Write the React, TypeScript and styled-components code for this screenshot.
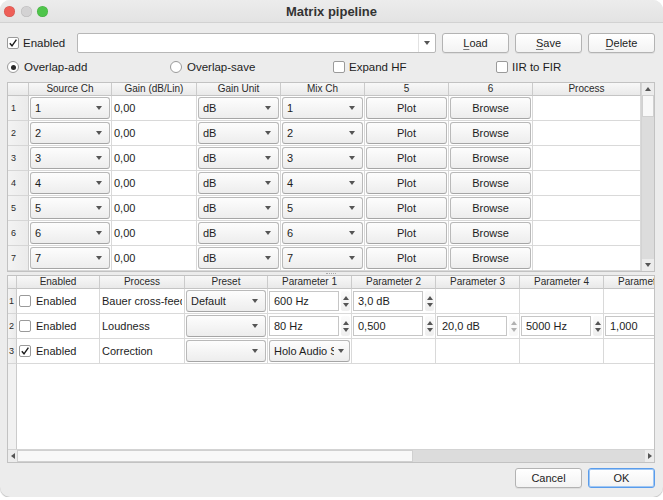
import React from 'react';
import styled, { createGlobalStyle, css } from 'styled-components';

const GlobalStyle = createGlobalStyle`
  html, body {
    margin: 0;
    padding: 0;
    background: #ffffff;
  }
  body {
    font-family: "Liberation Sans", Arial, sans-serif;
    color: #1d1d1d;
  }
  * {
    box-sizing: border-box;
  }
`;

const topColumns = ['Source Ch', 'Gain (dB/Lin)', 'Gain Unit', 'Mix Ch', '5', '6', 'Process'];
const bottomColumns = [
  'Enabled',
  'Process',
  'Preset',
  'Parameter 1',
  'Parameter 2',
  'Parameter 3',
  'Parameter 4',
  'Parameter 5',
];

type Param = { kind: 'spin'; value: string; dim?: boolean } | { kind: 'combo'; value: string } | null;

const filters: { enabled: boolean; process: string; preset: string; params: Param[] }[] = [
  {
    enabled: false,
    process: 'Bauer cross-feed',
    preset: 'Default',
    params: [{ kind: 'spin', value: '600 Hz' }, { kind: 'spin', value: '3,0 dB' }, null, null, null],
  },
  {
    enabled: false,
    process: 'Loudness',
    preset: '',
    params: [
      { kind: 'spin', value: '80 Hz' },
      { kind: 'spin', value: '0,500' },
      { kind: 'spin', value: '20,0 dB', dim: true },
      { kind: 'spin', value: '5000 Hz' },
      { kind: 'spin', value: '1,000' },
    ],
  },
  {
    enabled: true,
    process: 'Correction',
    preset: '',
    params: [{ kind: 'combo', value: 'Holo Audio Spring' }, null, null, null, null],
  },
];

const Check = ({ checked }: { checked?: boolean }) => (
  <CheckBox>
    {checked && (
      <svg width="10" height="10" viewBox="0 0 10 10">
        <path d="M1.8 5.2 L4 7.8 L8.4 1.6" fill="none" stroke="#1d1d1d" strokeWidth="1.4" />
      </svg>
    )}
  </CheckBox>
);

const Spin = ({ value, dim }: { value: string; dim?: boolean }) => (
  <SpinBox>
    <SpinField>{value}</SpinField>
    <Stepper $dim={dim}>
      <ArrowUp />
      <ArrowDown />
    </Stepper>
  </SpinBox>
);

export default function App() {
  return (
    <>
      <GlobalStyle />
      <Window>
        <TitleBar>
          <Lights>
            <Light $color="#ee5f58" />
            <Light $color="#d3d2d3" />
            <Light $color="#4fc54b" />
          </Lights>
          <Title>Matrix pipeline</Title>
          <span />
        </TitleBar>

        <Content>
          <Toolbar>
            <CheckLabel>
              <Check checked />
              Enabled
            </CheckLabel>
            <PresetCombo>
              <PresetField />
              <PresetArrow>
                <ArrowDown />
              </PresetArrow>
            </PresetCombo>
            <PushButton>
              <u>L</u>oad
            </PushButton>
            <PushButton>
              <u>S</u>ave
            </PushButton>
            <PushButton>
              <u>D</u>elete
            </PushButton>
          </Toolbar>

          <Options>
            <CheckLabel>
              <Radio $on />
              Overlap-add
            </CheckLabel>
            <CheckLabel>
              <Radio />
              Overlap-save
            </CheckLabel>
            <CheckLabel>
              <Check />
              Expand HF
            </CheckLabel>
            <CheckLabel>
              <Check />
              IIR to FIR
            </CheckLabel>
          </Options>

          <TopPanel>
            <Viewport>
              <TopGrid>
                <HeaderCell />
                {topColumns.map((c) => (
                  <HeaderCell key={c}>{c}</HeaderCell>
                ))}
                {[1, 2, 3, 4, 5, 6, 7].map((n) => (
                  <React.Fragment key={n}>
                    <RowHead>{n}</RowHead>
                    <Cell>
                      <Combo>
                        <span>{n}</span>
                        <ArrowDown />
                      </Combo>
                    </Cell>
                    <Cell $text>0,00</Cell>
                    <Cell>
                      <Combo>
                        <span>dB</span>
                        <ArrowDown />
                      </Combo>
                    </Cell>
                    <Cell>
                      <Combo>
                        <span>{n}</span>
                        <ArrowDown />
                      </Combo>
                    </Cell>
                    <Cell>
                      <CellButton>Plot</CellButton>
                    </Cell>
                    <Cell>
                      <CellButton>Browse</CellButton>
                    </Cell>
                    <Cell />
                  </React.Fragment>
                ))}
              </TopGrid>
            </Viewport>
            <VScroll>
              <ScrollArrow>
                <ArrowUp />
              </ScrollArrow>
              <VThumb />
              <VTrack />
              <ScrollArrow>
                <ArrowDown />
              </ScrollArrow>
            </VScroll>
          </TopPanel>

          <Splitter>
            <Grip />
          </Splitter>

          <BottomPanel>
            <BottomViewport>
              <BottomGrid>
                <HeaderCell />
                {bottomColumns.map((c) => (
                  <HeaderCell key={c}>{c}</HeaderCell>
                ))}
                {filters.map((f, i) => (
                  <React.Fragment key={i}>
                    <RowHead $narrow>{i + 1}</RowHead>
                    <Cell $text>
                      <Check checked={f.enabled} />
                      <EnabledText>Enabled</EnabledText>
                    </Cell>
                    <Cell $text>
                      <Clip>{f.process}</Clip>
                    </Cell>
                    <Cell>
                      <Combo>
                        <span>{f.preset}</span>
                        <ArrowDown />
                      </Combo>
                    </Cell>
                    {f.params.map((p, j) => (
                      <Cell key={j}>
                        {p?.kind === 'spin' && <Spin value={p.value} dim={p.dim} />}
                        {p?.kind === 'combo' && (
                          <Combo $tight>
                            <Clip>{p.value}</Clip>
                            <ArrowDown />
                          </Combo>
                        )}
                      </Cell>
                    ))}
                  </React.Fragment>
                ))}
              </BottomGrid>
            </BottomViewport>
            <HScroll>
              <HArrow>
                <ArrowLeft />
              </HArrow>
              <HThumb />
              <HTrack />
              <HArrow>
                <ArrowRight />
              </HArrow>
            </HScroll>
          </BottomPanel>

          <Footer>
            <PushButton>Cancel</PushButton>
            <PushButton $default>OK</PushButton>
          </Footer>
        </Content>
      </Window>
    </>
  );
}

const Window = styled.div`
  width: 663px;
  height: 497px;
  background: #ececec;
  border-radius: 10px;
  overflow: hidden;
  display: flex;
  flex-direction: column;
  box-shadow: 0 1px 1px rgba(0, 0, 0, 0.25);
`;

const TitleBar = styled.div`
  flex: none;
  height: 23px;
  display: grid;
  grid-template-columns: 1fr auto 1fr;
  align-items: center;
  padding: 0 4px;
  background: linear-gradient(#ececec, #e3e3e3);
  border-bottom: 1px solid #d2d2d2;
`;

const Lights = styled.div`
  display: flex;
  gap: 5.5px;
  padding-top: 1px;
`;

const Light = styled.span<{ $color: string }>`
  width: 11px;
  height: 11px;
  border-radius: 50%;
  background: ${(p) => p.$color};
  box-shadow: inset 0 0 0 0.5px rgba(0, 0, 0, 0.12);
`;

const Title = styled.div`
  font-size: 13px;
  font-weight: bold;
  color: #333333;
`;

const Content = styled.div`
  flex: 1;
  display: flex;
  flex-direction: column;
  padding: 10px 8px 9px 7px;
  font-size: 11px;
`;

const Toolbar = styled.div`
  display: flex;
  align-items: center;
  height: 20px;
  gap: 6px;
`;

const CheckLabel = styled.label`
  display: flex;
  align-items: center;
  gap: 4px;
  font-size: 11.5px;
  color: #1d1d1d;
  white-space: nowrap;
`;

const CheckBox = styled.span`
  flex: none;
  width: 12px;
  height: 12px;
  border: 1px solid #9a9a9a;
  border-radius: 2px;
  background: #ffffff;
  display: flex;
  align-items: center;
  justify-content: center;
`;

const Radio = styled.span<{ $on?: boolean }>`
  flex: none;
  width: 12px;
  height: 12px;
  border: 1px solid #9a9a9a;
  border-radius: 50%;
  background: #ffffff;
  display: flex;
  align-items: center;
  justify-content: center;
  margin-right: 1px;
  &::after {
    content: '';
    width: 5px;
    height: 5px;
    border-radius: 50%;
    background: ${(p) => (p.$on ? '#2a2a2a' : 'transparent')};
  }
`;

const PresetCombo = styled.div`
  flex: 1;
  height: 20px;
  margin-left: 6px;
  display: flex;
  border: 1px solid #b7b7b7;
  border-radius: 2px;
  background: #ffffff;
`;

const PresetField = styled.div`
  flex: 1;
`;

const PresetArrow = styled.div`
  width: 17px;
  display: flex;
  align-items: center;
  justify-content: center;
  border-left: 1px solid #e2e2e2;
`;

const PushButton = styled.button<{ $default?: boolean }>`
  flex: none;
  width: 67px;
  height: 20px;
  padding: 0;
  font: 11px "Liberation Sans", Arial, sans-serif;
  color: #1d1d1d;
  background: linear-gradient(#ffffff, #f3f3f3);
  border: 1px solid #b3b3b3;
  border-radius: 3px;
  box-shadow: 0 1px 0 rgba(0, 0, 0, 0.06);

  u {
    text-underline-offset: 2px;
    text-decoration-color: #777;
  }

  ${(p) =>
    p.$default &&
    css`
      border-color: #5a9ceb;
      box-shadow: inset 0 0 0 1px #9fc7f4;
    `}
`;

const Options = styled.div`
  display: grid;
  grid-template-columns: repeat(4, 163px);
  height: 14px;
  margin-top: 7px;
  align-items: center;
`;

const TopPanel = styled.div`
  height: 190px;
  margin-top: 8px;
  display: flex;
  border: 1px solid #c2c2c2;
  background: #ffffff;
`;

const Viewport = styled.div`
  flex: 1;
  overflow: hidden;
`;

const TopGrid = styled.div`
  display: grid;
  grid-template-columns: 21px 83px 85px 84px 84px 84px 84px 108px;
  grid-template-rows: 13px;
  grid-auto-rows: 25px;
`;

const HeaderCell = styled.div`
  background: linear-gradient(#f8f8f8, #e9e9e9);
  border-right: 1px solid #cbcbcb;
  border-bottom: 1px solid #c4c4c4;
  font-size: 10px;
  line-height: 12px;
  text-align: center;
  color: #2a2a2a;
  white-space: nowrap;
  overflow: hidden;
`;

const RowHead = styled.div<{ $narrow?: boolean }>`
  background: linear-gradient(to right, #f3f3f3, #ebebeb);
  border-right: 1px solid #cbcbcb;
  border-bottom: 1px solid #d6d6d6;
  font-size: 9px;
  color: #2a2a2a;
  display: flex;
  align-items: center;
  padding-left: ${(p) => (p.$narrow ? '1px' : '3px')};
`;

const Cell = styled.div<{ $text?: boolean }>`
  background: #ffffff;
  border-right: 1px solid #d9d9d9;
  border-bottom: 1px solid #d9d9d9;
  display: flex;
  align-items: center;
  padding: ${(p) => (p.$text ? '0 2px' : '1px')};
  font-size: 11px;
  color: #1d1d1d;
  overflow: hidden;
  white-space: nowrap;
`;

const Combo = styled.div<{ $tight?: boolean }>`
  flex: 1;
  align-self: stretch;
  min-width: 0;
  display: flex;
  align-items: center;
  justify-content: space-between;
  gap: 4px;
  padding: 0 ${(p) => (p.$tight ? '5px' : '7px')} 0 4px;
  background: linear-gradient(#fdfdfd, #ededed);
  border: 1px solid #b9b9b9;
  border-bottom-color: #a5a5a5;
  border-radius: 3px;
  font-size: 11px;
`;

const CellButton = styled.div`
  flex: 1;
  align-self: stretch;
  display: flex;
  align-items: center;
  justify-content: center;
  background: linear-gradient(#fdfdfd, #ededed);
  border: 1px solid #b9b9b9;
  border-bottom-color: #a5a5a5;
  border-radius: 3px;
  font-size: 11px;
`;

const Clip = styled.span`
  overflow: hidden;
  white-space: nowrap;
  min-width: 0;
`;

const EnabledText = styled.span`
  margin-left: 5px;
`;

const ArrowDown = styled.span`
  flex: none;
  width: 0;
  height: 0;
  border-left: 3px solid transparent;
  border-right: 3px solid transparent;
  border-top: 4px solid #555555;
`;

const ArrowUp = styled.span`
  flex: none;
  width: 0;
  height: 0;
  border-left: 3px solid transparent;
  border-right: 3px solid transparent;
  border-bottom: 4px solid #555555;
`;

const ArrowLeft = styled.span`
  width: 0;
  height: 0;
  border-top: 3px solid transparent;
  border-bottom: 3px solid transparent;
  border-right: 4px solid #555555;
`;

const ArrowRight = styled.span`
  width: 0;
  height: 0;
  border-top: 3px solid transparent;
  border-bottom: 3px solid transparent;
  border-left: 4px solid #555555;
`;

const SpinBox = styled.div`
  flex: 1;
  align-self: stretch;
  display: flex;
  gap: 2px;
  padding: 1px 0;
  min-width: 0;
`;

const SpinField = styled.div`
  flex: 1;
  min-width: 0;
  display: flex;
  align-items: center;
  padding-left: 4px;
  border: 1px solid #c6c6c6;
  background: #ffffff;
  overflow: hidden;
`;

const Stepper = styled.div<{ $dim?: boolean }>`
  width: 9px;
  display: flex;
  flex-direction: column;
  align-items: center;
  justify-content: center;
  gap: 3px;
  border-radius: 2px;
  background: linear-gradient(#fbfbfb, #eeeeee);
  opacity: ${(p) => (p.$dim ? 0.45 : 1)};
`;

const VScroll = styled.div`
  width: 13px;
  display: flex;
  flex-direction: column;
  background: #e6e6e6;
  border-left: 1px solid #d3d3d3;
`;

const ScrollArrow = styled.div`
  height: 12px;
  display: flex;
  align-items: center;
  justify-content: center;
  background: #ececec;
`;

const VThumb = styled.div`
  height: 22px;
  background: #f8f8f8;
  border: 1px solid #d0d0d0;
`;

const VTrack = styled.div`
  flex: 1;
  background: #dcdcdc;
`;

const Splitter = styled.div`
  height: 3px;
  display: flex;
  align-items: center;
  justify-content: center;
`;

const Grip = styled.div`
  width: 10px;
  border-top: 1px dotted #a8a8a8;
`;

const BottomPanel = styled.div`
  height: 188px;
  display: flex;
  flex-direction: column;
  border: 1px solid #c2c2c2;
  background: #ffffff;
`;

const BottomViewport = styled.div`
  flex: 1;
  overflow: hidden;
  background: linear-gradient(to right, #f1f1f1 8px, #cbcbcb 8px, #cbcbcb 9px, #ffffff 9px);
`;

const BottomGrid = styled.div`
  display: grid;
  grid-template-columns: 9px 83px 85px 83px 84px 84px 84px 84px 84px;
  grid-template-rows: 13px;
  grid-auto-rows: 25px;
  width: max-content;
`;

const HScroll = styled.div`
  height: 13px;
  display: flex;
  border-top: 1px solid #d3d3d3;
  background: #dcdcdc;
`;

const HArrow = styled.div`
  width: 9px;
  display: flex;
  align-items: center;
  justify-content: center;
  background: #ececec;
`;

const HThumb = styled.div`
  width: 396px;
  background: #f8f8f8;
  border: 1px solid #d0d0d0;
`;

const HTrack = styled.div`
  flex: 1;
`;

const Footer = styled.div`
  display: flex;
  justify-content: flex-end;
  gap: 6px;
  margin-top: 5px;
`;
